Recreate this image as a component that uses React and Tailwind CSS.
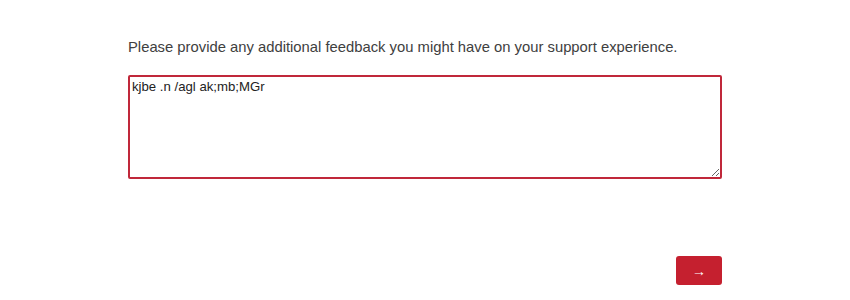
import React from 'react';

export default function App() {
  return (
    <div className="w-[850px] h-[300px] bg-white" style={{ fontFamily: '"Liberation Sans", Arial, sans-serif' }}>
      <div className="ml-[128px] w-[594px] pt-[37px]">
        <p className="text-[14.8px] leading-[20px] text-[#404040] whitespace-nowrap">
          Please provide any additional feedback you might have on your support experience.
        </p>
        <textarea
          className="mt-[18px] block w-[594px] h-[104px] border-2 border-[#c0283a] rounded-[2px] px-[2px] pt-[1px] text-[13.2px] leading-[18px] text-[#222] outline-none"
          defaultValue="kjbe .n /agl ak;mb;MGr"
        />
        <div className="flex justify-end mt-[77px]">
          <button className="w-[46px] h-[29px] rounded-[3px] bg-[#c5202f] text-white text-[14px] leading-none flex items-center justify-center">
            →
          </button>
        </div>
      </div>
    </div>
  );
}
